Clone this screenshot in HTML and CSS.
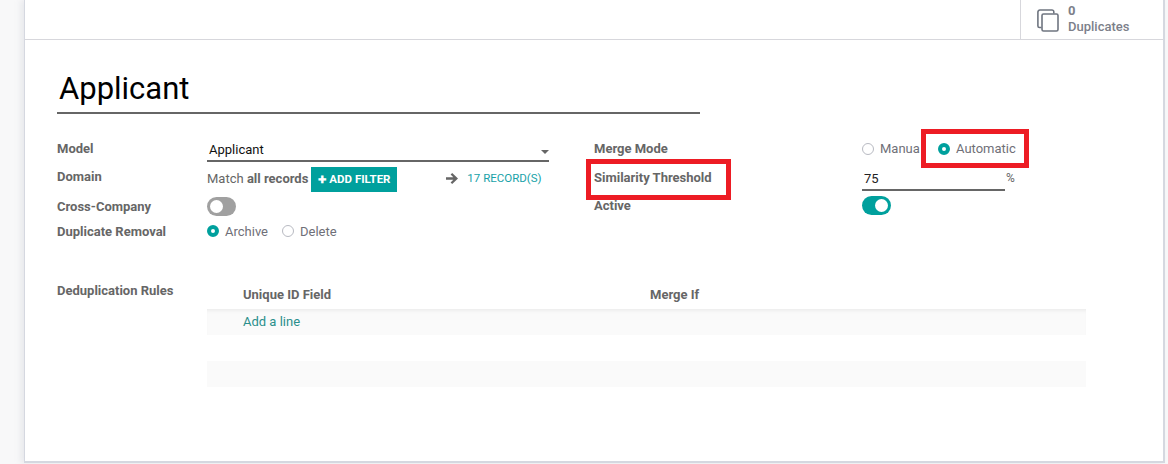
FILE: index.html
```html
<!DOCTYPE html>
<html lang="en">
<head>
<meta charset="utf-8">
<title>Applicant</title>
<link rel="stylesheet" href="styles.css">
</head>
<body>
<main class="sheet">
  <header class="statbar">
    <div class="statbtn">
      <svg class="staticon" width="22" height="23" viewBox="0 0 22 23" fill="none" stroke="#6f7580" stroke-width="1.6">
        <path d="M4.5 18.5H2.5a1.6 1.6 0 0 1-1.6-1.6V3A2 2 0 0 1 3 1h12a1.8 1.8 0 0 1 1.8 1.8V4.6"/>
        <rect x="5" y="5" width="16" height="17" rx="1.5"/>
      </svg>
      <div class="stattext"><b>0</b><span>Duplicates</span></div>
    </div>
  </header>
  <section class="form">
    <h1 class="title">Applicant</h1>
    <div class="groups">
      <div class="group group-left">
        <div class="label row-model">Model</div>
        <div class="select"><span>Applicant</span><i class="caret"></i></div>
        <div class="label row-domain">Domain</div>
        <div class="domain">
          <span>Match <b>all records</b></span>
          <span class="addbtn"><b class="plus">✚</b> ADD FILTER</span>
          <span class="records"><svg width="12" height="11" viewBox="0 0 12 11" fill="#666"><path d="M6.2 0 12 5.5 6.2 11 4.6 9.4 7.3 6.8H0V4.2h7.3L4.6 1.6z"/></svg><em>17 RECORD(S)</em></span>
        </div>
        <div class="label">Cross-Company</div>
        <div class="cell"><span class="toggle"></span></div>
        <div class="label">Duplicate Removal</div>
        <div class="cell radios">
          <span class="radio on"></span><span class="radiotext">Archive</span>
          <span class="radio second"></span><span class="radiotext">Delete</span>
        </div>
      </div>
      <div class="group group-right">
        <div class="label row-merge">Merge Mode</div>
        <div class="cell radios merge-radios">
          <span class="radio"></span><span class="radiotext manual">Manua</span>
          <span class="radio on auto"></span><span class="radiotext">Automatic</span>
        </div>
        <div class="label">Similarity Threshold</div>
        <div class="threshold"><span class="num">75</span><span class="pct">%</span></div>
        <div class="label">Active</div>
        <div class="cell"><span class="toggle active"></span></div>
      </div>
    </div>
    <div class="rules">
      <div class="label rules-label">Deduplication Rules</div>
      <div class="table">
        <div class="thead"><span class="col-a">Unique ID Field</span><span>Merge If</span></div>
        <div class="trow first"><span class="addline">Add a line</span></div>
        <div class="trow blank"></div>
        <div class="trow"></div>
      </div>
    </div>
  </section>
  <div class="mark mark-auto"></div>
  <div class="mark mark-sim"></div>
</main>
</body>
</html>
```
FILE: styles.css
```css
* { box-sizing: border-box; }
html, body { margin: 0; height: 464px; overflow: hidden; }
body {
  background: #f8f8f9;
  font-family: Roboto, "Liberation Sans", sans-serif;
  font-size: 13px;
  color: #666;
  padding-left: 24px;
}
.sheet {
  position: relative;
  width: 1141px;
  height: 463px;
  background: #fff;
  border: 1px solid #d5d8e0;
  border-width: 0 2px 2px 1px;
  box-shadow: -3px 0 6px rgba(180, 185, 195, .25);
}
.statbar {
  height: 40px;
  border-bottom: 1px solid #d7d7dc;
  display: flex;
  justify-content: flex-end;
}
.statbtn {
  width: 143px;
  border-left: 1px solid #d7d7dc;
  display: flex;
  align-items: center;
  padding-left: 16px;
  gap: 9px;
}
.staticon { margin-top: 1px; }
.stattext {
  display: flex;
  flex-direction: column;
  font-size: 13px;
  font-weight: 500;
  line-height: 16px;
  color: #7c7f8a;
  margin-top: -1px;
}
.form { padding: 27px 0 0 32px; }
.title {
  margin: 0;
  width: 643px;
  height: 47px;
  font-size: 31px;
  line-height: 44px;
  font-weight: 400;
  color: #000;
  padding-left: 2px;
  border-bottom: 2px solid #666;
}
.groups { display: flex; margin-top: 22px; }
.group { display: grid; align-items: center; }
.group-left {
  grid-template-columns: 150px 342px;
  grid-template-rows: 27px 29px 29px 20px;
}
.group-right {
  margin-left: 45px;
  grid-template-columns: 268px 170px;
  grid-template-rows: 27px 29px 27px;
}
.label { font-weight: 700; color: #666; }
.row-model { padding-bottom: 2px; }
.row-domain { margin-top: -2px; align-self: start; padding-top: 8px; }
.row-merge { margin-top: -2px; }
.select {
  align-self: stretch;
  border-bottom: 2px solid #666;
  height: 26px;
  padding: 6px 0 0 2px;
  color: #111;
  display: flex;
  justify-content: space-between;
}
.caret {
  width: 0;
  height: 0;
  margin: 8px 0 0;
  border: 4px solid transparent;
  border-top-color: #666;
  border-bottom: 0;
}
.domain { display: flex; align-items: center; height: 25px; margin-top: 1px; }
.domain b { color: #666; }
.addbtn {
  display: flex;
  align-items: center;
  gap: 3px;
  width: 86px;
  height: 25px;
  margin: 2px 0 0 3px;
  padding-left: 7px;
  background: #00a09d;
  color: #fff;
  font-size: 11.5px;
  font-weight: 700;
}
.plus { font-size: 10px; color: #fff !important; }
.records {
  display: flex;
  align-items: center;
  margin-left: 49px;
  gap: 9px;
}
.records em {
  font-style: normal;
  font-size: 11.5px;
  color: #17a2a8;
}
.cell { display: flex; align-items: center; }
.merge-radios { margin-top: -2px; }
.toggle {
  position: relative;
  display: block;
  width: 29px;
  height: 19px;
  border-radius: 10px;
  background: #a0a0a0;
}
.toggle::after {
  content: "";
  position: absolute;
  top: 3px;
  left: 3px;
  width: 13px;
  height: 13px;
  border-radius: 50%;
  background: #fff;
}
.toggle.active { background: #00a09d; }
.toggle.active::after { left: 13px; }
.radio {
  display: block;
  width: 12px;
  height: 12px;
  flex: none;
  border: 1px solid #b8bac2;
  border-radius: 50%;
  background: #fff;
}
.radio.on { border: 4px solid #00a09d; }
.radio.second { margin-left: 14px; }
.radio.auto { margin-left: 18px; }
.radiotext { margin-left: 6px; color: #6f6f78; }
.manual { width: 40px; overflow: hidden; white-space: nowrap; }
.threshold {
  display: flex;
  align-items: flex-start;
  width: 143px;
  height: 25px;
  margin-top: 2px;
  border-bottom: 2px solid #666;
  position: relative;
  padding: 5px 0 0 2px;
  color: #222;
}
.pct {
  position: absolute;
  left: 144px;
  top: 5px;
  font-size: 12px;
  color: #666;
}
.rules { display: flex; margin-top: 31px; }
.rules-label { width: 150px; margin-top: 11px; }
.table { width: 879px; margin-top: 8px; }
.thead {
  display: flex;
  height: 29px;
  align-items: center;
  font-weight: 700;
  padding-left: 36px;
  padding-bottom: 1px;
}
.col-a { width: 407px; }
.trow { height: 26px; background: #fafafa; padding-left: 36px; line-height: 25px; }
.trow.first { box-shadow: inset 0 4px 4px -3px rgba(0, 0, 0, .08); }
.trow.blank { background: #fff; }
.addline { color: #2a8f8c; }
.mark {
  position: absolute;
  border: 5px solid #ed1c24;
}
.mark-auto { left: 896px; top: 129px; width: 108px; height: 39px; }
.mark-sim { left: 561px; top: 159px; width: 145px; height: 41px; }
```
